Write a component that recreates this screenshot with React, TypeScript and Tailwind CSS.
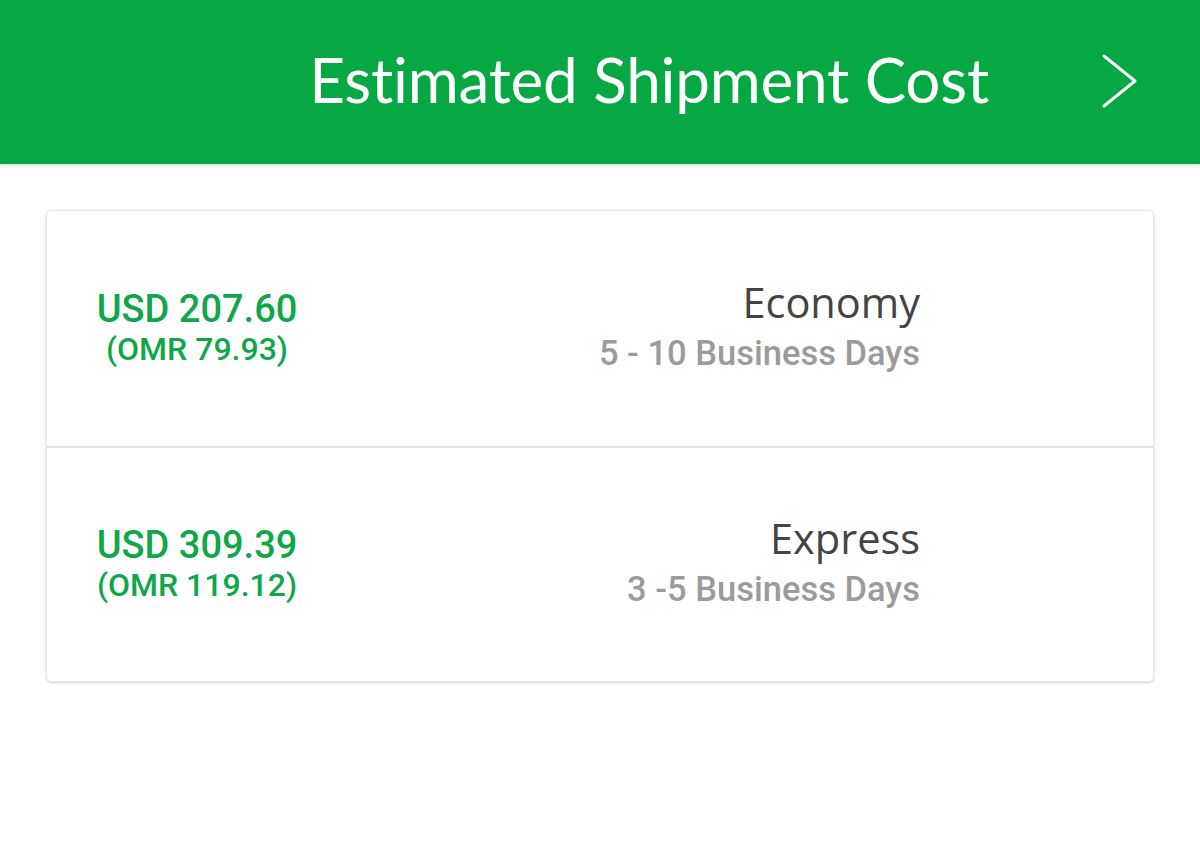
const RATES = [
  { usd: 'USD 207.60', omr: '(OMR 79.93)', name: 'Economy', days: '5 - 10 Business Days' },
  { usd: 'USD 309.39', omr: '(OMR 119.12)', name: 'Express', days: '3 -5 Business Days' },
];

export default function App() {
  return (
    <div className="min-h-[863px] bg-white" style={{ fontFamily: 'Roboto, "Liberation Sans", sans-serif' }}>
      {/* Header */}
      <div className="h-[164px] bg-[#05a843] flex items-center justify-end pr-[61px] gap-[112px] shadow-[0_2px_3px_rgba(0,0,0,0.12)]">
        <h1 className="text-white text-[62px] leading-none font-normal tracking-[-0.2px] pb-[6px]" style={{ fontFamily: 'Lato, "Open Sans", sans-serif' }}>
          Estimated Shipment Cost
        </h1>
        <svg width="38" height="56" viewBox="0 0 38 56" fill="none" className="mb-[2px]">
          <path d="M3 3 L34 28 L3 53" stroke="white" strokeWidth="3" strokeLinecap="round" strokeLinejoin="round" />
        </svg>
      </div>

      {/* Card */}
      <div className="px-[46px] pt-[46px]">
        <div className="bg-white rounded-[5px] border border-[#e6e6e6] shadow-[0_1px_3px_rgba(0,0,0,0.18)]">
          {RATES.map((r, i) => (
            <div key={r.name} className={`h-[235px] flex items-center ${i > 0 ? 'border-t-2 border-[#e2e2e2]' : ''}`}>
              <div className="w-[300px] flex flex-col items-center text-[#10a64a]">
                <div className="text-[38px] leading-[40px] font-medium">{r.usd}</div>
                <div className="text-[32px] leading-[40px] font-medium">{r.omr}</div>
              </div>
              <div className="flex-1 flex flex-col items-end pr-[233px] mb-[8px]">
                <div className="text-[41.5px] leading-[46px] text-[#444444] pb-[10px]" style={{ fontFamily: '"Open Sans", Lato, sans-serif' }}>{r.name}</div>
                <div className="text-[34.5px] leading-[36px] font-medium text-[#9b9b9b]">{r.days}</div>
              </div>
            </div>
          ))}
        </div>
      </div>
    </div>
  );
}
